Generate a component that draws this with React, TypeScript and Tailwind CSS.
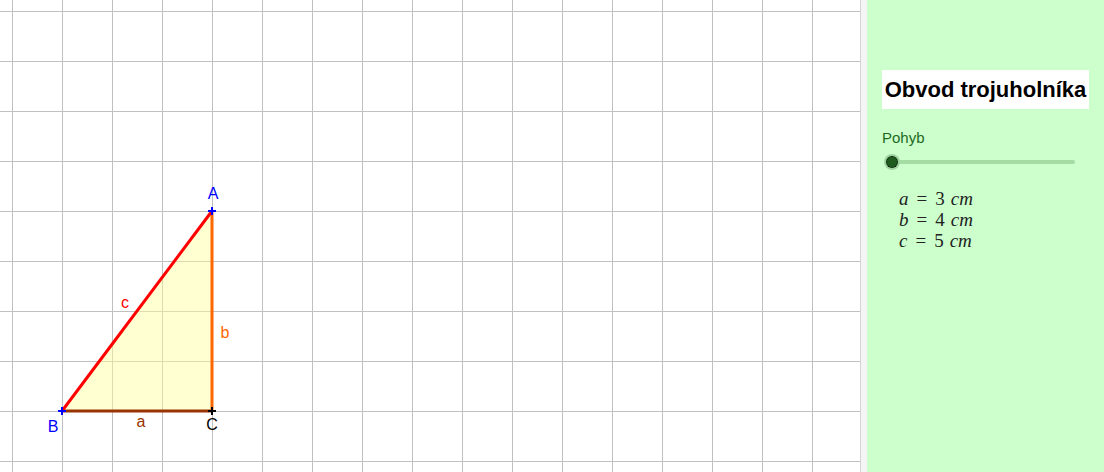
import React from 'react';

const UNIT = 50;
const ORIGIN_X = 12;
const ORIGIN_Y = 11;

function GridCanvas() {
  const vertical = Array.from({ length: 18 }, (_, i) => ORIGIN_X + i * UNIT);
  const horizontal = Array.from({ length: 10 }, (_, i) => ORIGIN_Y + i * UNIT);

  const A = { x: 212, y: 211 };
  const B = { x: 62, y: 411 };
  const C = { x: 212, y: 411 };

  const cross = (p: { x: number; y: number }, color: string) => (
    <g stroke={color} strokeWidth={2}>
      <line x1={p.x - 4} y1={p.y} x2={p.x + 4} y2={p.y} />
      <line x1={p.x} y1={p.y - 4} x2={p.x} y2={p.y + 4} />
    </g>
  );

  return (
    <svg width={860} height={472} className="block shrink-0 bg-white">
      <g stroke="#c0c0c0" strokeWidth={1}>
        {vertical.map((x) => (
          <line key={`v${x}`} x1={x + 0.5} y1={0} x2={x + 0.5} y2={472} />
        ))}
        {horizontal.map((y) => (
          <line key={`h${y}`} x1={0} y1={y + 0.5} x2={860} y2={y + 0.5} />
        ))}
      </g>

      <polygon
        points={`${A.x},${A.y} ${B.x},${B.y} ${C.x},${C.y}`}
        fill="#ffff99"
        fillOpacity={0.45}
        stroke="none"
      />
      <line x1={B.x} y1={B.y} x2={C.x} y2={C.y} stroke="#993300" strokeWidth={3} />
      <line x1={C.x} y1={C.y} x2={A.x} y2={A.y} stroke="#ff6600" strokeWidth={3} />
      <line x1={B.x} y1={B.y} x2={A.x} y2={A.y} stroke="#ff0000" strokeWidth={3} />

      {cross(A, '#0000ff')}
      {cross(B, '#0000ff')}
      {cross(C, '#000000')}

      <g fontFamily="'Liberation Sans', Arial, sans-serif" fontSize={16}>
        <text x={213} y={199} fill="#0000ff" textAnchor="middle">A</text>
        <text x={53} y={432} fill="#0000ff" textAnchor="middle">B</text>
        <text x={212} y={430} fill="#000000" textAnchor="middle">C</text>
        <text x={141} y={427} fill="#993300" textAnchor="middle">a</text>
        <text x={225} y={338} fill="#ff6600" textAnchor="middle">b</text>
        <text x={125} y={308} fill="#ff0000" textAnchor="middle">c</text>
      </g>
    </svg>
  );
}

function MathLine({ v, n }: { v: string; n: string }) {
  return (
    <div className="leading-[21px]">
      <span className="italic">{v}</span>
      <span className="px-[8px]">=</span>
      <span>{n}</span>
      <span className="italic pl-[6px]">cm</span>
    </div>
  );
}

export default function App() {
  return (
    <div className="flex h-[472px] w-[1104px] overflow-hidden font-['Liberation_Sans',Arial,sans-serif]">
      <GridCanvas />
      <div className="w-[7px] shrink-0 border-l border-[#d4d4d4] bg-[#f5f5f5]" />
      <div className="flex-1 bg-[#ccffcc] pl-[15px] pt-[70px]">
        <div className="flex h-[39px] w-[207px] items-center justify-center bg-white">
          <span className="text-[22px] font-bold text-black">Obvod trojuholníka</span>
        </div>

        <div className="mt-[18px] text-[15px] text-[#1d6b1d]">Pohyb</div>

        <div className="relative mt-[4px] h-[16px] w-[195px]">
          <div className="absolute left-[8px] right-[2px] top-[6px] h-[4px] rounded-full bg-[#a4dca4]" />
          <div className="absolute left-[2px] top-0 h-[16px] w-[16px] rounded-full bg-[#9fd49f]" />
          <div className="absolute left-[4px] top-[2px] h-[12px] w-[12px] rounded-full border border-dotted border-black bg-[#1f5a1f]" />
        </div>

        <div className="mt-[18px] pl-[17px] font-['Liberation_Serif','Times_New_Roman',serif] text-[19px] text-[#222]">
          <MathLine v="a" n="3" />
          <MathLine v="b" n="4" />
          <MathLine v="c" n="5" />
        </div>
      </div>
    </div>
  );
}
